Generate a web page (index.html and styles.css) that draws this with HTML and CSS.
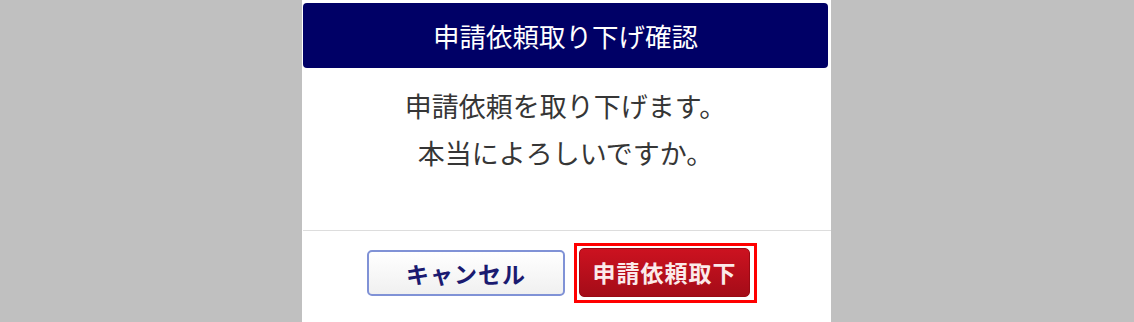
FILE: index.html
```html
<!DOCTYPE html>
<html lang="ja">
<head>
<meta charset="utf-8">
<title>申請依頼取り下げ確認</title>
<link rel="stylesheet" href="styles.css">
</head>
<body>
<div class="page">
  <div class="dialog">
    <div class="dialog-header">申請依頼取り下げ確認</div>
    <div class="dialog-body">
      <p class="msg">申請依頼を取り下げます。</p>
      <p class="msg">本当によろしいですか。</p>
    </div>
    <div class="dialog-footer">
      <button class="btn btn-cancel" type="button">キャンセル</button>
      <span class="focus-ring"><button class="btn btn-danger" type="button">申請依頼取下</button></span>
    </div>
  </div>
</div>
</body>
</html>
```

FILE: styles.css
```css
html, body {
  margin: 0;
  padding: 0;
  height: 100%;
}
body {
  background: #c0c0c0;
  font-family: "Noto Sans CJK JP", "Noto Sans", sans-serif;
  overflow: hidden;
}
.page {
  display: flex;
  justify-content: center;
  height: 100%;
}
.dialog {
  width: 529px;
  margin-right: 1px;
  background: #ffffff;
  display: flex;
  flex-direction: column;
  padding: 3px 3px 0 1px;
  box-sizing: border-box;
}
.dialog-header {
  height: 65px;
  background: #000066;
  border-radius: 4px;
  color: #ffffff;
  font-size: 26.5px;
  display: flex;
  align-items: center;
  justify-content: center;
  line-height: 1;
  padding-top: 1px;
  box-sizing: border-box;
}
.dialog-body {
  height: 162px;
  box-sizing: border-box;
  padding-top: 14px;
  text-align: center;
  color: #363636;
  font-size: 27px;
}
.msg {
  margin: 0;
  line-height: 47px;
}
.dialog-footer {
  border-top: 1px solid #dddddd;
  margin-right: -3px;
  display: flex;
  justify-content: center;
  align-items: center;
  gap: 9px;
  height: 85px;
  box-sizing: border-box;
  padding-right: 10px;
}
.btn {
  font-family: "Noto Sans CJK JP", "Noto Sans", sans-serif;
  font-weight: bold;
  font-size: 23px;
  letter-spacing: 1px;
  border-radius: 5px;
  cursor: pointer;
  padding: 0;
  line-height: 1;
  display: block;
}
.btn-cancel {
  width: 198px;
  height: 46px;
  color: #1a1a70;
  border: 2px solid #8092d6;
  background: linear-gradient(#ffffff, #f0f0f0);
}
.focus-ring {
  display: block;
  border: 3px solid #ff0000;
  padding: 2px 4px 3px 2px;
}
.btn-danger {
  width: 171px;
  height: 49px;
  color: #fbeaea;
  border: 1px solid #9a0a14;
  background: linear-gradient(#cc1220, #a40c18);
}
```
